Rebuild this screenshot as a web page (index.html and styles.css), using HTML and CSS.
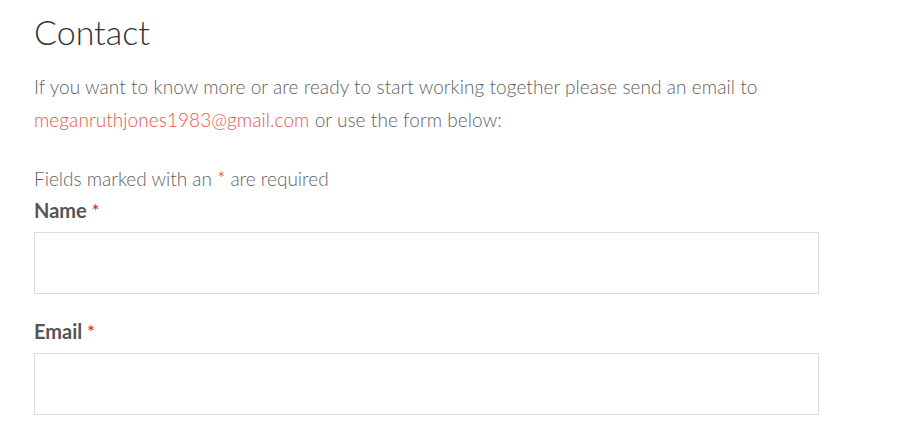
FILE: index.html
```html
<!DOCTYPE html>
<html>
<head>
<meta charset="utf-8">
<link rel="stylesheet" href="styles.css">
</head>
<body>
<main class="page">
  <h1 class="title">Contact</h1>
  <p class="intro">If you want to know more or are ready to start working together please send an email to <a class="mail" href="#">meganruthjones1983@gmail.com</a> or use the form below:</p>
  <form class="form">
    <p class="note">Fields marked with an <span class="req">*</span> are required</p>
    <div class="field">
      <label class="label">Name <span class="req">*</span></label>
      <input class="input" type="text">
    </div>
    <div class="field">
      <label class="label">Email <span class="req">*</span></label>
      <input class="input" type="text">
    </div>
  </form>
</main>
</body>
</html>
```
FILE: styles.css
```css
html, body { margin: 0; padding: 0; background: #fff; }
body { font-family: Lato, "Open Sans", sans-serif; color: #666; }
.page { padding: 10px 0 0 34px; width: 785px; }
.title {
  margin: 0;
  font-family: Lato, sans-serif;
  font-weight: 300;
  font-size: 34px;
  line-height: 44px;
  color: #333;
}
.intro {
  margin: 16px 0 0;
  font-weight: 300;
  font-size: 19px;
  line-height: 33px;
  letter-spacing: 0.07px;
  color: #5f5f5f;
}
.mail { color: #e8554e; text-decoration: none; }
.form { margin-top: 30px; }
.note { margin: 0 0 5px; font-weight: 300; font-size: 19px; line-height: 26px; color: #5f5f5f; }
.req { color: #e8141b; }
.field { display: flex; flex-direction: column; gap: 8px; margin-bottom: 24px; }
.label { font-weight: 700; font-size: 20px; line-height: 26px; color: #555; }
.label .req { font-weight: 400; font-size: 19px; }
.input {
  box-sizing: border-box;
  height: 62px;
  width: 785px;
  border: 1px solid #ddd;
  margin: 0;
  padding: 0 12px;
  background: #fff;
}
```
